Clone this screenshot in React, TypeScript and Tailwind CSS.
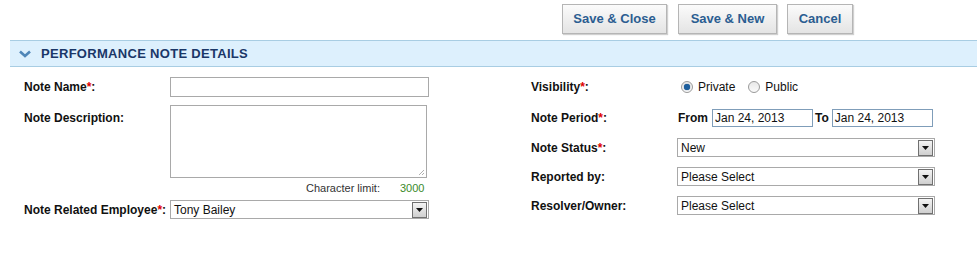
import React from "react";

const Req = () => <span className="text-[#e00000]">*</span>;

function Select({ value, width }: { value: string; width: string }) {
  return (
    <div className={`flex h-[19px] items-center justify-between border border-[#a9a9a9] bg-white ${width}`}>
      <span className="pl-[3px] text-[12px] leading-none text-[#111]">{value}</span>
      <span className="mr-[1px] flex h-[16px] w-[15px] items-center justify-center border border-[#707070] bg-gradient-to-b from-[#f4f4f4] to-[#cfcfcf]">
        <svg width="7" height="4" viewBox="0 0 7 4">
          <path d="M0 0h7L3.5 4z" fill="#111" />
        </svg>
      </span>
    </div>
  );
}

function Radio({ checked }: { checked?: boolean }) {
  return (
    <span className="flex h-[12px] w-[12px] items-center justify-center rounded-full border border-[#9a9a9a] bg-gradient-to-b from-[#e8e8e8] to-[#fafafa]">
      {checked && <span className="h-[6px] w-[6px] rounded-full bg-[#1d5f9e] shadow-[0_0_1px_#0a3d70]" />}
    </span>
  );
}

function Btn({ children, w }: { children: React.ReactNode; w: string }) {
  return (
    <div
      className={`flex h-[30px] items-center justify-center border border-[#b5b5b5] bg-gradient-to-b from-[#fbfbfb] to-[#e4e4e4] text-[13px] font-bold text-[#2b5d91] shadow-[1px_1px_1px_#d0d0d0] ${w}`}
    >
      {children}
    </div>
  );
}

export default function App() {
  return (
    <div className="h-[271px] w-[977px] bg-white font-['Liberation_Sans',Arial,sans-serif] text-[#111]">
      <div className="flex pl-[562px] pt-[4px]">
        <Btn w="w-[105px]">Save &amp; Close</Btn>
        <div className="w-[11px]" />
        <Btn w="w-[99px]">Save &amp; New</Btn>
        <div className="w-[10px]" />
        <Btn w="w-[66px]">Cancel</Btn>
      </div>
      <div className="ml-[10px] mt-[6px] flex h-[27px] items-center border-y border-[#a8cde3] bg-[#ddf0fd] pl-[9px]">
        <svg width="12" height="8" viewBox="0 0 12 8" className="mr-[10px]">
          <path d="M1 1.5l5 4.5 5-4.5" stroke="#4f86b8" strokeWidth="2.6" fill="none" />
        </svg>
        <span className="text-[13px] font-bold tracking-[0.3px] text-[#1a3768]">PERFORMANCE NOTE DETAILS</span>
      </div>
      <div className="flex">
        <div className="w-[507px] pl-[24px]">
          <div className="mt-[10px] flex h-[20px] items-center">
            <span className="w-[146px] text-[12px] font-bold">Note Name<Req />:</span>
            <div className="h-[20px] w-[259px] border border-[#a9a9a9] bg-white" />
          </div>
          <div className="mt-[8px] flex items-start">
            <span className="w-[146px] pt-[4px] text-[12px] font-bold">Note Description:</span>
            <div className="relative h-[73px] w-[257px] border border-[#a9a9a9] bg-white">
              <svg width="7" height="7" viewBox="0 0 7 7" className="absolute bottom-[1px] right-[1px]">
                <path d="M6 1L1 6M6 4L4 6" stroke="#b0b0b0" strokeWidth="1" />
              </svg>
            </div>
          </div>
          <div className="mt-[3px] flex h-[14px] items-center text-[11px]">
            <span className="ml-[282px] text-[#333]">Character limit:</span>
            <span className="ml-[20px] text-[#3a8a2a]">3000</span>
          </div>
          <div className="mt-[5px] flex h-[19px] items-center">
            <span className="w-[146px] text-[12px] font-bold">Note Related Employee<Req />:</span>
            <Select value="Tony Bailey" width="w-[259px]" />
          </div>
        </div>
        <div className="pl-[24px]">
          <div className="mt-[13px] flex h-[14px] items-center">
            <span className="w-[146px] text-[12px] font-bold">Visibility<Req />:</span>
            <span className="ml-[4px]"><Radio checked /></span>
            <span className="ml-[5px] text-[12px]">Private</span>
            <span className="ml-[13px]"><Radio /></span>
            <span className="ml-[5px] text-[12px]">Public</span>
          </div>
          <div className="mt-[15px] flex h-[18px] items-center">
            <span className="w-[146px] text-[12px] font-bold">Note Period<Req />:</span>
            <span className="ml-[1px] text-[12px] font-bold">From</span>
            <div className="ml-[4px] flex h-[18px] w-[101px] items-center border border-[#7f9db9] bg-white pl-[2px] text-[12px]">Jan 24, 2013</div>
            <span className="ml-[2px] text-[12px] font-bold">To</span>
            <div className="ml-[3px] flex h-[18px] w-[101px] items-center border border-[#7f9db9] bg-white pl-[2px] text-[12px]">Jan 24, 2013</div>
          </div>
          <div className="mt-[11px] flex h-[19px] items-center">
            <span className="w-[146px] text-[12px] font-bold">Note Status<Req />:</span>
            <Select value="New" width="w-[258px]" />
          </div>
          <div className="mt-[10px] flex h-[19px] items-center">
            <span className="w-[146px] text-[12px] font-bold">Reported by:</span>
            <Select value="Please Select" width="w-[258px]" />
          </div>
          <div className="mt-[10px] flex h-[19px] items-center">
            <span className="w-[146px] text-[12px] font-bold">Resolver/Owner:</span>
            <Select value="Please Select" width="w-[258px]" />
          </div>
        </div>
      </div>
    </div>
  );
}
